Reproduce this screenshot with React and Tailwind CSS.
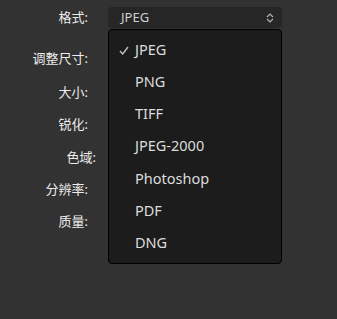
const FORMATS = ['JPEG', 'PNG', 'TIFF', 'JPEG-2000', 'Photoshop', 'PDF', 'DNG'];

const LABELS = [
  { text: '调整尺寸:', cls: 'h-[34px] w-[90px]' },
  { text: '大小:', cls: 'h-[33px] w-[90px]' },
  { text: '锐化:', cls: 'h-[32px] w-[90px]' },
  { text: '色域:', cls: 'h-[33px] w-[98px]' },
  { text: '分辨率:', cls: 'h-[32px] w-[90px]' },
  { text: '质量:', cls: 'h-[32px] w-[90px]' },
];

const font = { fontFamily: '"Noto Sans", "Noto Sans CJK SC", sans-serif' };

export default function App() {
  return (
    <div className="w-[337px] h-[319px] bg-[#323232] text-[#ececec] relative" style={font}>
      <div className="flex pt-[7px]">
        <div className="w-[90px] flex justify-end pr-[2px] text-[13px] leading-[21px]">格式:</div>
        <div className="ml-[18px] w-[174px] h-[21px] rounded-[4px] bg-[#262626] flex items-center justify-between pl-[13px] pr-[8px] text-[13px] text-[#d0d0d0]">
          <span>JPEG</span>
          <svg width="8" height="10" viewBox="0 0 8 10" fill="none" stroke="#b0b0b0" strokeWidth="1.2">
            <path d="M1 4 L4 1 L7 4" />
            <path d="M1 6 L4 9 L7 6" />
          </svg>
        </div>
      </div>

      <div className="flex flex-col pt-[14px] text-[13px]">
        {LABELS.map((l) => (
          <div key={l.text} className={`flex items-center justify-end pr-[2px] ${l.cls}`}>
            {l.text}
          </div>
        ))}
      </div>

      {/* dropdown menu */}
      <div className="absolute left-[108px] top-[29px] w-[174px] h-[235px] bg-[#1c1c1c] border border-black rounded-[4px] pt-[4px]">
        {FORMATS.map((f, i) => (
          <div key={f} className="flex items-center h-[32.1px] text-[14.5px] text-[#dcdcdc]">
            <span className="w-[26px] flex justify-center pl-[4px]">
              {i === 0 && (
                <svg width="10" height="9" viewBox="0 0 10 9" fill="none" stroke="#bdbdbd" strokeWidth="1.4">
                  <path d="M1 5 L3.7 8 L9 1" />
                </svg>
              )}
            </span>
            <span>{f}</span>
          </div>
        ))}
      </div>
    </div>
  );
}
